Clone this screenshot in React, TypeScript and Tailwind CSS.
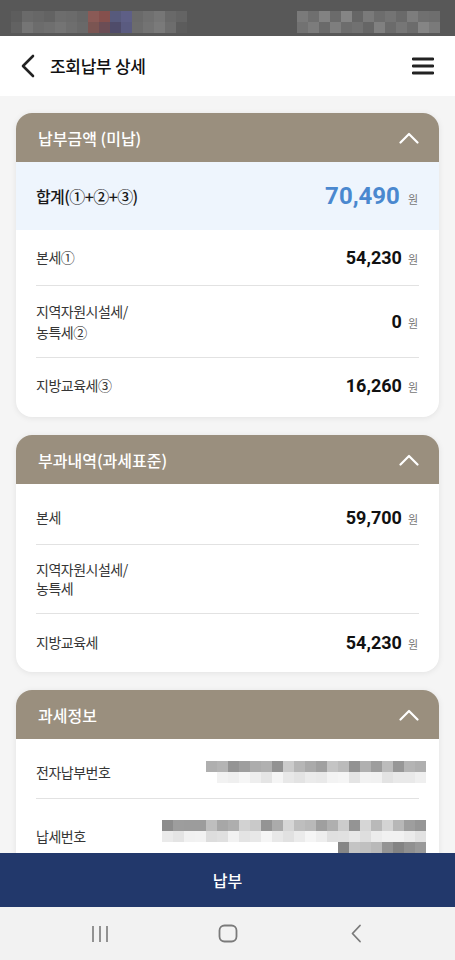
import React from 'react';

const kr = "font-['Noto_Sans_CJK_KR','Noto_Sans',sans-serif]";
const num = "font-['Roboto','Noto_Sans_CJK_KR',sans-serif]";

// deterministic grey shades for the blurred (mosaic) bits
function shades(seed: number, count: number, lo: number, hi: number) {
    let s = seed;
    const out: string[] = [];
    for (let i = 0; i < count; i++) {
        s = (s * 9301 + 49297) % 233280;
        const v = Math.round(lo + (s / 233280) * (hi - lo));
        const h = v.toString(16).padStart(2, '0');
        out.push(`#${h}${h}${h}`);
    }
    return out;
}

function Mosaic({ rows }: { rows: string[][] }) {
    return (
        <div className="flex flex-col items-end">
            {rows.map((row, i) => (
                <div key={i} className="flex">
                    {row.map((c, j) => (
                        <div key={j} className="w-[11px] h-[11px]" style={{ backgroundColor: c }} />
                    ))}
                </div>
            ))}
        </div>
    );
}

const statusLeft = [
    ['#5d5d5d', '#6a6a6a', '#676767', '#636363', '#6d6d6d', '#6b6b6b', '#666666', '#8a5a56', '#85504d', '#575a7c', '#5e5f86', '#6a6a6a', '#707070', '#767676', '#696969', '#646464'],
    ['#626262', '#757575', '#6c6c6c', '#6f6f6f', '#747474', '#6e6e6e', '#696969', '#7b5552', '#6b4d55', '#4f4c6a', '#5a5b80', '#6c6c6c', '#737373', '#7a7a7a', '#6d6d6d', '#5c5c5c'],
];
const statusRight = [
    ['#7a7a7a', '#6f6f6f', '#828282', '#6b6b6b', '#858585', '#666666', '#7a7a7a', '#6d6d6d', '#747474', '#6a6a6a', '#7d7d7d', '#707070', '#6e6e6e'],
    ['#727272', '#7c7c7c', '#6a6a6a', '#7e7e7e', '#6d6d6d', '#717171', '#666666', '#808080', '#6b6b6b', '#767676', '#6c6c6c', '#858585', '#7a7a7a'],
];

function ChevronUp() {
    return (
        <svg width="20" height="12" viewBox="0 0 20 12" fill="none">
            <path d="M1.5 10.5L10 2L18.5 10.5" stroke="white" strokeWidth="2.2" strokeLinecap="round" strokeLinejoin="round" />
        </svg>
    );
}

function CardHeader({ title }: { title: string }) {
    return (
        <div className="h-[49px] bg-[#9a8f7e] flex items-center justify-between pl-[22px] pr-[20px]">
            <span className={`${kr} text-white text-[16px] font-medium`}>{title}</span>
            <ChevronUp />
        </div>
    );
}

function Amount({ value }: { value: string }) {
    return (
        <div className="flex items-baseline gap-[6px]">
            <span className={`${num} text-[18px] font-bold text-[#111]`}>{value}</span>
            <span className={`${kr} text-[11px] text-[#777]`}>원</span>
        </div>
    );
}

function Divider() {
    return <div className="mx-5 h-px bg-[#e2e2e2]" />;
}

export default function App() {
    const eNo = [
        shades(7, 20, 0x8c, 0xd4),
        ['#ffffff', ...shades(13, 19, 0xe2, 0xf8)],
    ];
    const taxNo = [
        shades(21, 24, 0x88, 0xd6),
        shades(33, 24, 0xdc, 0xf6),
        shades(47, 8, 0x80, 0xc4),
    ];

    return (
        <div className={`${kr} w-full h-[960px] flex flex-col overflow-hidden bg-[#f5f5f5]`}>
            {/* status bar */}
            <div className="h-[36px] bg-[#585858] flex items-start justify-between pt-[11px] pl-[11px] pr-[15px] shrink-0">
                <Mosaic rows={statusLeft} />
                <Mosaic rows={statusRight} />
            </div>

            {/* title bar */}
            <div className="h-[60px] bg-white flex items-center justify-between pl-[20px] pr-[21px] shrink-0">
                <div className="flex items-center gap-[14px]">
                    <svg width="16" height="24" viewBox="0 0 16 24" fill="none">
                        <path d="M13 2L3 12L13 22" stroke="#222" strokeWidth="2.6" strokeLinecap="round" strokeLinejoin="round" />
                    </svg>
                    <span className="text-[17px] font-medium text-[#111] tracking-[-0.3px]">조회납부 상세</span>
                </div>
                <svg width="22" height="18" viewBox="0 0 22 18" fill="none">
                    <path d="M1 2H21M1 9H21M1 16H21" stroke="#222" strokeWidth="2.8" strokeLinecap="round" />
                </svg>
            </div>

            {/* scrolling content */}
            <div className="flex-1 overflow-hidden px-4 pt-[17px] flex flex-col gap-[18px]">
                <div className="bg-white rounded-[16px] overflow-hidden shadow-[0_1px_6px_rgba(0,0,0,0.08)] shrink-0">
                    <CardHeader title="납부금액 (미납)" />
                    <div className="h-[68px] bg-[#eef5fd] flex items-center justify-between pl-5 pr-[21px]">
                        <span className="text-[16px] font-medium text-[#1a1a1a] tracking-[-0.6px]">합계(①+②+③)</span>
                        <div className="flex items-baseline gap-[8px]">
                            <span className={`${num} text-[24px] font-bold text-[#4a88cf]`}>70,490</span>
                            <span className="text-[11px] text-[#777]">원</span>
                        </div>
                    </div>
                    <div className="h-[55px] flex items-center justify-between pl-5 pr-[21px]">
                        <span className="text-[14px] text-[#363636] tracking-[-0.5px]">본세①</span>
                        <Amount value="54,230" />
                    </div>
                    <Divider />
                    <div className="h-[71px] flex items-center justify-between pl-5 pr-[21px]">
                        <span className="text-[14px] leading-[21px] text-[#363636] tracking-[-0.5px]">
                            지역자원시설세/
                            <br />
                            농특세②
                        </span>
                        <Amount value="0" />
                    </div>
                    <Divider />
                    <div className="h-[55px] flex items-center justify-between pl-5 pr-[21px] mb-[4px]">
                        <span className="text-[14px] text-[#363636] tracking-[-0.5px]">지방교육세③</span>
                        <Amount value="16,260" />
                    </div>
                </div>

                <div className="bg-white rounded-[16px] overflow-hidden shadow-[0_1px_6px_rgba(0,0,0,0.08)] shrink-0">
                    <CardHeader title="부과내역(과세표준)" />
                    <div className="pt-[7px] pb-[2px]">
                        <div className="h-[53px] flex items-center justify-between pl-5 pr-[21px]">
                            <span className="text-[14px] text-[#363636] tracking-[-0.5px]">본세</span>
                            <Amount value="59,700" />
                        </div>
                        <Divider />
                        <div className="h-[68px] flex items-center justify-between pl-5 pr-[21px]">
                            <span className="text-[14px] leading-[19px] text-[#363636] tracking-[-0.5px]">
                                지역자원시설세/
                                <br />
                                농특세
                            </span>
                        </div>
                        <Divider />
                        <div className="h-[56px] flex items-center justify-between pl-5 pr-[21px]">
                            <span className="text-[14px] text-[#363636] tracking-[-0.5px]">지방교육세</span>
                            <Amount value="54,230" />
                        </div>
                    </div>
                </div>

                <div className="bg-white rounded-t-[16px] overflow-hidden shadow-[0_1px_6px_rgba(0,0,0,0.08)] shrink-0">
                    <CardHeader title="과세정보" />
                    <div className="pt-[7px]">
                        <div className="h-[52px] flex items-center justify-between pl-5 pr-[13px]">
                            <span className="text-[14px] text-[#363636] tracking-[-0.5px]">전자납부번호</span>
                            <Mosaic rows={eNo} />
                        </div>
                        <Divider />
                        <div className="py-[21px] flex items-center justify-between pl-5 pr-[13px]">
                            <span className="text-[14px] text-[#363636] tracking-[-0.5px]">납세번호</span>
                            <Mosaic rows={taxNo} />
                        </div>
                    </div>
                </div>
            </div>

            {/* pay button */}
            <button className="h-[54px] bg-[#22386b] text-white text-[16px] font-medium shrink-0">납부</button>

            {/* android nav bar */}
            <div className="h-[53px] bg-[#f2f2f2] flex items-center justify-center shrink-0">
                <div className="w-[128px] flex justify-center">
                    <svg width="18" height="18" viewBox="0 0 18 18" fill="none">
                        <path d="M2 1V17M9 1V17M16 1V17" stroke="#7a7a7a" strokeWidth="1.6" />
                    </svg>
                </div>
                <div className="w-[128px] flex justify-center">
                    <svg width="20" height="19" viewBox="0 0 20 19" fill="none">
                        <rect x="1.5" y="1.5" width="17" height="16" rx="5" stroke="#7a7a7a" strokeWidth="1.8" />
                    </svg>
                </div>
                <div className="w-[128px] flex justify-center">
                    <svg width="12" height="19" viewBox="0 0 12 19" fill="none">
                        <path d="M10 1.5L2.5 9.5L10 17.5" stroke="#7a7a7a" strokeWidth="1.8" strokeLinecap="round" strokeLinejoin="round" />
                    </svg>
                </div>
            </div>
        </div>
    );
}
